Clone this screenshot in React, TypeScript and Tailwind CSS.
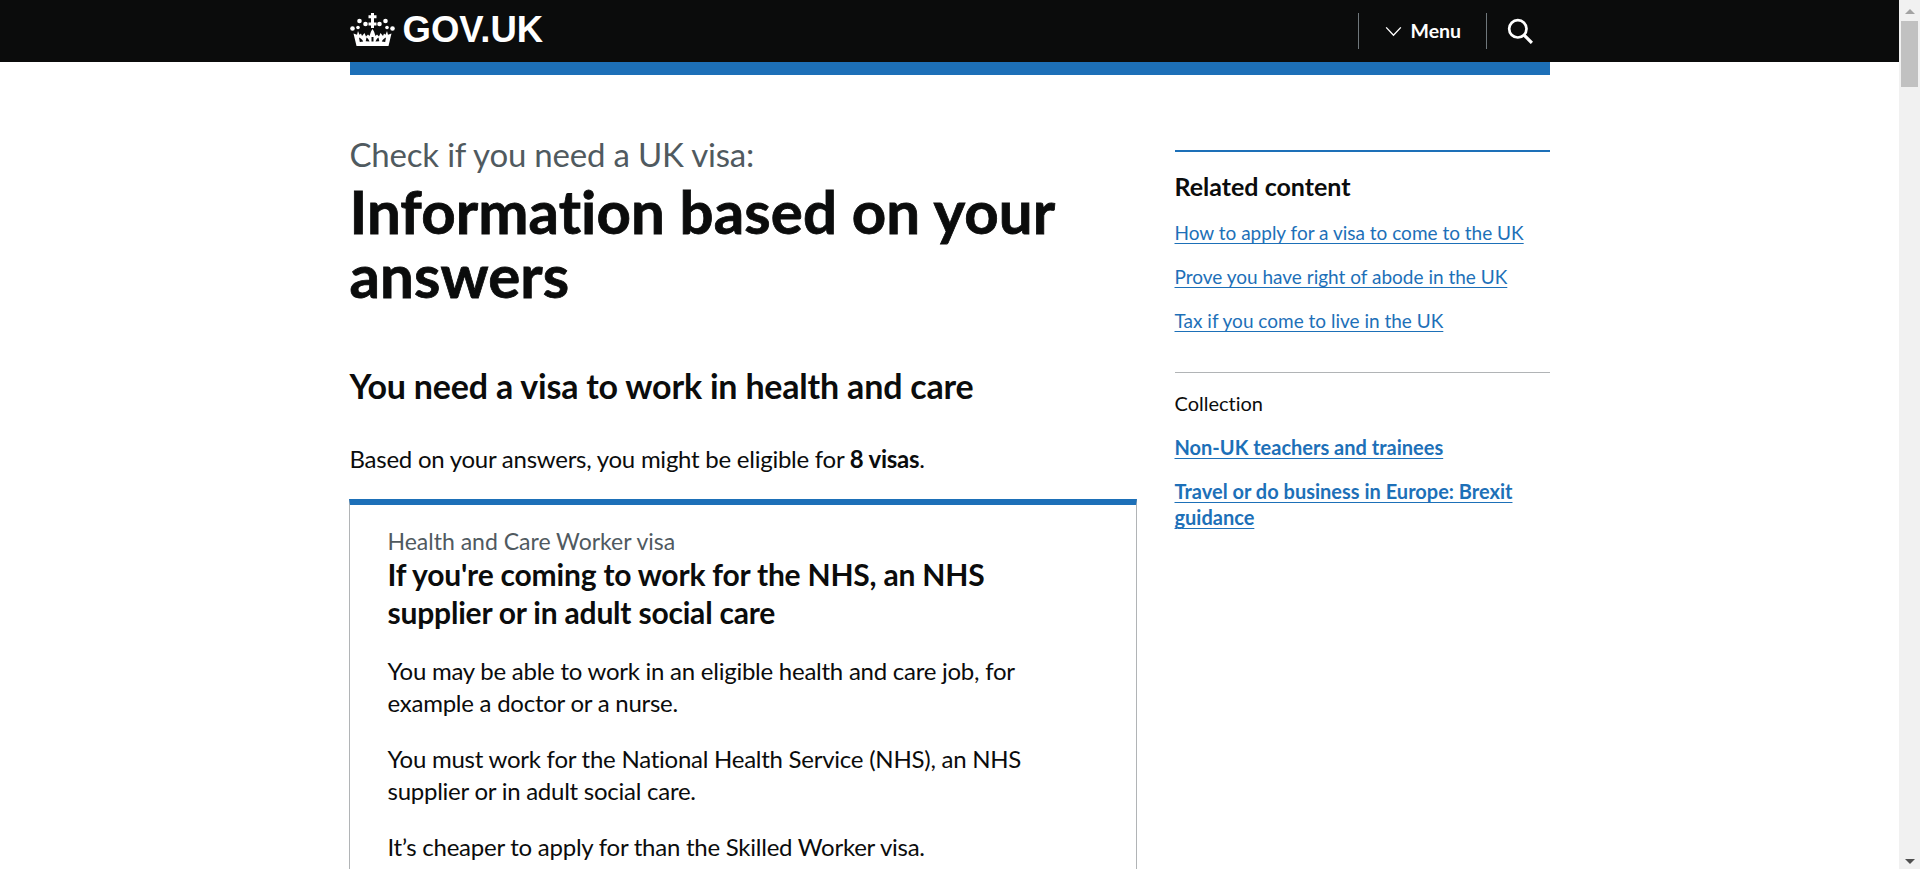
import React from "react";

function Crown() {
  return (
    <svg viewBox="0 0 45 33" className="w-[45px] h-[33px] shrink-0 -mt-[3px]" fill="#fff">
      <circle cx="2.500" cy="15.500" r="2.300" />
      <circle cx="9.500" cy="8" r="2.300" />
      <circle cx="15.500" cy="11" r="2.300" />
      <circle cx="29.500" cy="11" r="2.300" />
      <circle cx="35.500" cy="8" r="2.300" />
      <circle cx="42.500" cy="15.500" r="2.300" />
      <circle cx="8" cy="14.500" r="1.800" />
      <circle cx="37" cy="14.500" r="1.800" />
      <path d="M21 0h3v2.200h2.500v3H24v4.300h2.500v3H24V15h-3v-2.500h-2.500v-3H21V5.200h-2.500v-3H21z" />
      <path d="M3.500 20.500l3.500 1.300 1-3.800 1.500 3.800 1.500-1.300 1 2.500 2.500-3 1.500 3.500 2-2 1.500 1.500 1.500-4.500 1.500-2.500 1.500 2.500 1.500 4.500 1.500-1.500 2 2 1.500-3.500 2.500 3 1-2.500 1.500 1.300 1.500-3.800 1 3.800 3.500-1.300L38.500 33h-32z" />
      <path d="M9 24.500c2 1 3.500 2 4.200 4L9.800 29zM36 24.500c-2 1-3.500 2-4.200 4l3.400.5zM16.500 24.500c1.500 1 2.500 2.500 3 4l-3.800-.2zM28.500 24.500c-1.500 1-2.500 2.500-3 4l3.800-.2z" fill="#0b0c0c" />
      <path d="M21.500 24h2v4.500h-2z" fill="#0b0c0c" />
    </svg>
  );
}

function Scrollbar() {
  return (
    <div className="w-[21px] h-[869px] bg-[#f1f1f1] flex flex-col items-center justify-between shrink-0 pt-[9px] pb-[5px]">
      <div className="flex flex-col items-center w-[17px]">
        <div className="w-0 h-0 border-l-[5px] border-r-[5px] border-b-[5px] border-l-transparent border-r-transparent border-b-[#a3a3a3]" />
        <div className="w-[17px] h-[66px] mt-[7px] bg-[#c1c1c1]" />
      </div>
      <div className="w-0 h-0 border-l-[5px] border-r-[5px] border-t-[5px] border-l-transparent border-r-transparent border-t-[#505050]" />
    </div>
  );
}

const link = "text-[#1d70b8] underline underline-offset-[3px] decoration-1";

export default function App() {
  return (
    <div className="flex h-[869px] overflow-hidden bg-white text-[#0b0c0c] font-['Lato','Noto_Sans',sans-serif] [font-variant-ligatures:none]">
      <div className="flex-1 min-w-0 overflow-hidden">
        <header className="bg-[#0b0c0c] h-[62px]">
          <div className="w-[1200px] mx-auto flex items-center h-[62px] text-white">
            <Crown />
            <span className="ml-[8px] -mt-[2px] font-['Liberation_Sans',sans-serif] font-bold text-[36.500px] leading-none">GOV.UK</span>
            <div className="ml-auto flex items-center h-[36px]">
              <div className="w-px h-[36px] bg-[#6f777b]" />
              <div className="w-[127px] flex items-center pl-[26px]">
                <svg viewBox="0 0 18 12" className="w-[17px] h-[11px]" fill="none" stroke="#fff" strokeWidth="1.500">
                  <path d="M1 1.500 9 10l8-8.500" />
                </svg>
                <span className="ml-[9px] text-[19.500px] font-bold leading-none">Menu</span>
              </div>
              <div className="w-px h-[36px] bg-[#6f777b]" />
              <div className="w-[63px] flex items-center pl-[20px]">
                <svg viewBox="0 0 24 24" className="w-[26px] h-[26px]" fill="none" stroke="#fff" strokeWidth="2.500">
                  <circle cx="10" cy="10" r="8" />
                  <path d="m16 16 7 7" strokeWidth="3" />
                </svg>
              </div>
            </div>
          </div>
        </header>
        <div className="w-[1200px] mx-auto">
          <div className="h-[13px] bg-[#1d70b8]" />
          <div className="flex mt-[75px] gap-[38px]">
            <main className="w-[787px] shrink-0">
              <div className="text-[33px] leading-[46px] tracking-[-0.2px] text-[#505a5f] -mt-[19px]">Check if you need a UK visa:</div>
              <h1 className="text-[60px] leading-[64px] font-bold tracking-[0.1px] mt-[2px] [-webkit-text-stroke:0.8px_#0b0c0c]">Information based on your answers</h1>
              <h2 className="text-[34px] leading-[40px] tracking-[-0.2px] font-bold mt-[59px]">You need a visa to work in health and care</h2>
              <p className="text-[24px] leading-[32px] tracking-[-0.25px] mt-[37px]">Based on your answers, you might be eligible for <b>8 visas</b>.</p>
              <div className="mt-[24px] h-[400px] border-t-[6px] border-t-[#1d70b8] border-x border-x-[#b1b4b6] -ml-px pl-[38px] pr-[60px] pt-[23px]">
                <div className="text-[23px] leading-[26px] text-[#505a5f]">Health and Care Worker visa</div>
                <h3 className="text-[30px] leading-[38px] tracking-[-0.2px] font-bold mt-[1px]">If you're coming to work for the NHS, an NHS supplier or in adult social care</h3>
                <p className="text-[24px] leading-[32px] tracking-[-0.25px] mt-[24px]">You may be able to work in an eligible health and care job, for example a doctor or a nurse.</p>
                <p className="text-[24px] leading-[32px] tracking-[-0.25px] mt-[24px]">You must work for the National Health Service (NHS), an NHS supplier or in adult social care.</p>
                <p className="text-[24px] leading-[32px] tracking-[-0.25px] mt-[24px]">It’s cheaper to apply for than the Skilled Worker visa.</p>
              </div>
            </main>
            <aside className="w-[375px] shrink-0 h-[500px] border-t-2 border-t-[#1d70b8] pt-[18px]">
              <h2 className="text-[25px] leading-[32px] font-bold">Related content</h2>
              <ul className="mt-[18px] text-[19px] leading-[26px]">
                <li><a className={link}>How to apply for a visa to come to the UK</a></li>
                <li className="mt-[18px]"><a className={link}>Prove you have right of abode in the UK</a></li>
                <li className="mt-[18px]"><a className={link}>Tax if you come to live in the UK</a></li>
              </ul>
              <div className="border-t border-t-[#b1b4b6] mt-[38px] pt-[17px] text-[20px] leading-[26px]">Collection</div>
              <ul className="mt-[18px] text-[20px] leading-[26px] font-bold">
                <li><a className={link}>Non-UK teachers and trainees</a></li>
                <li className="mt-[18px]"><a className={link}>Travel or do business in Europe: Brexit guidance</a></li>
              </ul>
            </aside>
          </div>
        </div>
      </div>
      <Scrollbar />
    </div>
  );
}
